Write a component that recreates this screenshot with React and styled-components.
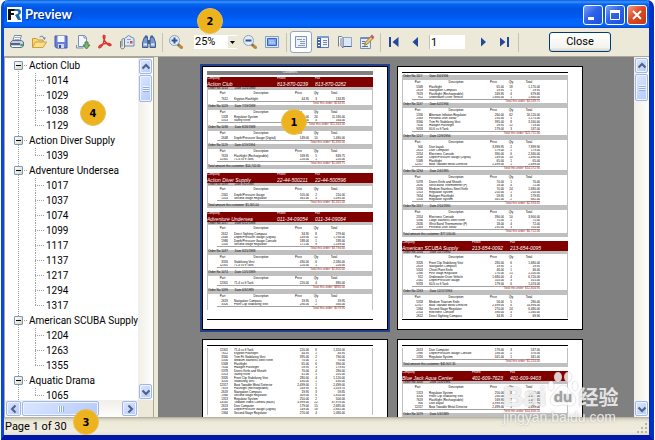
import React, { useState } from 'react'
import styled, { createGlobalStyle, css } from 'styled-components'

const GlobalStyle = createGlobalStyle`
* { box-sizing: border-box; }
body {
  margin: 0;
  background: #fff;
  font-family: Roboto, 'Liberation Sans', sans-serif;
  font-size: 11px;
  color: #000;
}
button, input, select { font: inherit; color: inherit; margin: 0; padding: 0; }
ul { list-style: none; margin: 0; padding: 0; }
`;

const Window = styled.div`
position: relative;
height: 100vh;
margin: 0 1px;
display: flex;
flex-direction: column;
overflow: hidden;
background: #ece9d8;
border: solid #0a48dc;
border-width: 0 5px 5px 3px;
border-bottom-color: #0018a8;
border-right-color: #0030c8;
border-radius: 7px 7px 0 0;
`;

const TitleBar = styled.header`
flex: none;
height: 28px;
margin: 0 -5px 0 -3px;
padding: 0 7px 0 6px;
display: flex;
align-items: center;
gap: 2px;
background: linear-gradient(#0a5be0 0, #3a93ff 2px, #0566f0 4px, #0054e3 9px, #0058ee 16px, #0268fe 23px, #0262f5 26px, #0144c8 28px);
`;

const Title = styled.h1`
flex: 1;
margin: 0 0 0 1px;
font: bold 13px 'Lato', sans-serif;
color: #fff;
text-shadow: 1px 1px 1px #002a8c;
`;

const WindowButton = styled.button`
width: 20px;
height: 20px;
margin-top: 2px;
border: 1px solid #fff;
border-radius: 3px;
background: ${props => props.$close
    ? 'linear-gradient(135deg, #f0a088, #dd4a22 45%, #c8380e)'
    : 'linear-gradient(135deg, #7ba2f4, #2e62e8 45%, #1a50dc)'};
svg { display: block; margin: auto; }
`;

const Toolbar = styled.div`
flex: none;
height: 29px;
padding-left: 2px;
display: flex;
align-items: center;
border-bottom: 1px solid #aca899;
`;

const ToolButton = styled.button`
flex: none;
width: 22px;
height: 22px;
display: flex;
align-items: center;
justify-content: center;
border: 1px solid transparent;
border-radius: 3px;
background: none;
${props => props.$active && css`
  background: #fff;
  border-color: #8aa9cc;
`}
`;

const Separator = styled.div`
flex: none;
width: 1px;
height: 19px;
margin: 0 ${props => props.$wide ? 3 : 2}px;
background: #c5c2b2;
`;

const ZoomSelect = styled.select`
width: 43px;
height: 14px;
margin: 0 2px 0 7px;
padding-left: 1px;
border: 0;
border-radius: 0;
appearance: none;
background: #fff;
line-height: 14px;
`;

const SelectBox = styled.label`
position: relative;
display: flex;
svg {
  position: absolute;
  right: 2px;
  top: 1px;
  pointer-events: none;
  background: #ece9d8;
}
`;

const PageInput = styled.input`
width: 36px;
height: 14px;
margin: 0 7px 0 2px;
padding-left: 1px;
border: 0;
border-left: 1px solid #c5c2b2;
background: #fff;
`;

const CloseButton = styled.button`
width: 62px;
height: 20px;
margin-left: 28px;
border: 1px solid #003c74;
border-radius: 3px;
background: linear-gradient(#fff, #f4f3ee 80%, #d8d2c6);
line-height: 16px;
`;

const Body = styled.div`
flex: 1;
min-height: 0;
display: flex;
gap: 4px;
`;

const Outline = styled.nav`
flex: none;
width: 150px;
display: grid;
grid-template-columns: 1fr 15px;
grid-template-rows: 1fr 17px;
border: 1px solid #aca899;
border-bottom: 0;
background: #fff;
`;

const Tree = styled.ul`
overflow: hidden;
padding: 0 0 0 9px;
font-size: 10px;
background: repeating-linear-gradient(#a0a0a0 0 1px, transparent 1px 2px) 13px 7px / 1px 100% no-repeat;
`;

const TreeRow = styled.div`
height: 15px;
display: flex;
align-items: center;
white-space: nowrap;
`;

const Expander = styled.button`
flex: none;
width: 9px;
height: 9px;
display: flex;
align-items: center;
justify-content: center;
border: 1px solid #7898b5;
border-radius: 1px;
background: linear-gradient(135deg, #fff, #d8d2c4);
`;

const Stub = styled.span`
flex: none;
width: 4px;
height: 1px;
margin: 0 1px;
background: repeating-linear-gradient(90deg, #a0a0a0 0 1px, transparent 1px 2px);
`;

const Branch = styled.span`
flex: none;
width: 9px;
height: 15px;
margin: 0 2px 0 21px;
background:
  repeating-linear-gradient(#a0a0a0 0 1px, transparent 1px 2px) 0 0 / 1px ${props => props.$last ? '8px' : '15px'} no-repeat,
  repeating-linear-gradient(90deg, #a0a0a0 0 1px, transparent 1px 2px) 0 7px / 9px 1px no-repeat;
`;

const ScrollTrack = styled.div`
display: flex;
flex-direction: ${props => props.$horizontal ? 'row' : 'column'};
flex: none;
padding: 1px;
gap: 1px;
background: ${props => props.$horizontal
    ? 'linear-gradient(#f0eee8, #fefefb)'
    : 'linear-gradient(90deg, #f0eee8, #fefefb)'};
${props => !props.$horizontal && 'width: 15px;'}
`;

const ScrollButton = styled.button`
flex: none;
width: ${props => props.$horizontal ? 15 : 13}px;
height: 15px;
display: flex;
align-items: center;
justify-content: center;
border: 1px solid #9db6ee;
border-radius: 2px;
box-shadow: inset 0 0 0 1px #eef3ff;
background: linear-gradient(135deg, #dbe5fe, #b6cbfa);
`;

const ScrollThumb = styled(ScrollButton)`
${props => props.$horizontal ? 'width: 77px;' : 'height: 27px;'}
`;

const ScrollSpace = styled.div`
flex: 1;
`;

const Corner = styled.div`
background: #ece9d8;
`;

const Viewer = styled.main`
flex: 1;
min-width: 0;
display: flex;
background: #808080;
`;

const Pages = styled.div`
flex: 1;
min-width: 0;
padding: 9px 7px 0 0;
display: flex;
flex-wrap: wrap;
align-content: flex-start;
justify-content: center;
gap: 9px;
overflow: hidden;
`;

const StatusBar = styled.footer`
flex: none;
height: 18px;
padding: 2px 0 0 1px;
display: flex;
align-items: center;
justify-content: space-between;
background: linear-gradient(#aca899 0, #d8d4c4 2px, #ece9d8 5px, #f0ede0 14px, #e4e0d0);
line-height: 16px;
`;

// report pages, rendered at 25% zoom

const Sheet = styled.article`
width: 186px;
height: 264px;
padding: 4px 14px 9px 4px;
display: flex;
flex-direction: column;
overflow: hidden;
border: 1px solid #000;
outline: ${props => props.$selected ? '2px solid #24408c' : 'none'};
background: #fff;
font: 3px/3px 'Liberation Sans', sans-serif;
white-space: nowrap;
`;

const SheetTitle = styled.div`
height: 4px;
margin-bottom: 2px;
background: #808080;
color: #fff;
text-align: center;
`;

const SheetRule = styled.div`
flex: none;
height: 1px;
margin: ${props => props.$top ? '1px 0 2px' : 'auto 0 0'};
background: #000;
`;

const Company = styled.div`
flex: none;
height: 10px;
display: grid;
grid-template-columns: 70px 38px 1fr;
grid-template-rows: 4px 6px;
background: #800000;
color: #fff;
em { font-size: 5px; line-height: 7px; overflow: hidden; }
`;

const OrderBar = styled.div`
height: ${props => props.$first ? 3 : 5}px;
padding-left: 1px;
display: flex;
gap: 7px;
background: #c0c0c0;
`;

const OrderBody = styled.div`
padding-left: 9px;
border: solid #c0c0c0;
border-width: 0 1px;
`;

const OrderTable = styled.table`
width: 128px;
table-layout: fixed;
border-spacing: 0;
border-bottom: ${props => props.$open ? '0' : '1px solid #a0a0a0'};
font-size: 3px;
line-height: 3px;
th, td { padding: 0; overflow: hidden; font-weight: normal; }
thead tr { height: ${props => props.$first ? 7 : 5}px; }
tbody tr { height: 4px; }
tbody tr:nth-child(even) { height: 3px; }
`;

const Cell = styled.td`
text-align: ${props => props.$align || 'right'};
`;

const OrderTotal = styled.div`
width: 128px;
height: 3px;
color: #a81818;
text-align: right;
`;

const CustomerTotal = styled.div`
flex: none;
height: 4px;
margin-bottom: 4px;
padding-left: 1px;
background: #c0c0c0;
`;

const Badge = styled.span`
position: absolute;
left: ${props => props.$x}px;
top: ${props => props.$y}px;
width: 26px;
height: 26px;
display: flex;
align-items: center;
justify-content: center;
border: 1px solid #e8c050;
border-radius: 50%;
background: #edb31e;
font: bold 11px 'DejaVu Sans Condensed', sans-serif;
`;

const Watermark = styled.div`
position: absolute;
right: 29px;
bottom: 10px;
width: 117px;
color: rgba(255, 255, 255, 0.8);
text-shadow: 0 0 2px rgba(128, 128, 128, 0.6);
font: 14px/16px 'Liberation Sans', 'Noto Sans CJK SC', sans-serif;
white-space: nowrap;
`;

const WatermarkLogo = styled.div`
display: flex;
align-items: flex-end;
height: 38px;
font: bold 28px/24px 'Liberation Sans', sans-serif;
span:last-child { font: bold 20px/24px 'Noto Sans CJK SC', sans-serif; }
svg { flex: none; }
`;

const outline = [
    { name: 'Action Club', orders: [1014, 1029, 1038, 1129] },
    { name: 'Action Diver Supply', orders: [1039] },
    { name: 'Adventure Undersea', orders: [1017, 1037, 1074, 1099, 1117, 1137, 1217, 1294, 1317] },
    { name: 'American SCUBA Supply', orders: [1204, 1263, 1355] },
    { name: 'Aquatic Drama', orders: [1065] },
]

const parts = {
    900: ['Dive kayak', 3999.95],
    912: ['Underwater Diver Vehicle', 1680],
    1313: ['Regulator System', 250],
    1314: ['Second Stage Regulator', 365],
    1316: ['Regulator System', 341],
    1320: ['Second Stage Regulator', 171],
    1328: ['Regulator System', 430],
    1330: ['Alternate Inflation Regulator', 260],
    1364: ['Second Stage Regulator', 270],
    1390: ['First Stage Regulator', 170],
    1946: ['Second Stage Regulator', 309],
    1986: ['Depth/Pressure Gauge Console', 188],
    2314: ['Electronic Console', 390],
    2341: ['Depth/Pressure Gauge', 105],
    2383: ['Personal Dive Sonar', 235],
    2390: ['Compass Console Mount', 29],
    2612: ['Direct Sighting Compass', 34.95],
    2613: ['Dive Computer', 179],
    2619: ['Navigation Compass', 19.95],
    2630: ['Wrist Band Thermometer (F)', 18],
    2648: ['Depth/Pressure Gauge (Digital)', 149],
    3316: ['Stabilizing Vest', 430],
    3326: ['Front Clip Stabilizing Vest', 280],
    3340: ['Trim Fit Stabilizing Vest', 395],
    5313: ['Safety Knife', 41],
    5318: ['Medium Titanium Knife', 56],
    5324: ['Chisel Point Knife', 46],
    5349: ['Flashlight', 65],
    5356: ['Medium Stainless Steel Knife', 70],
    5378: ['Divers Knife and Sheath', 70],
    5386: ['Large Stainless Steel Knife', 75],
    7612: ['Krypton Flashlight', 44.95],
    7619: ['Flashlight (Rechargeable)', 169.95],
    7654: ['Halogen Flashlight', 59.95],
    9316: ['95.1 cu ft Tank', 325],
    9318: ['60.6 cu ft Tank', 179],
    12301: ['71.4 cu ft Tank', 220],
    12317: ['Boat Towable Metal Detector', 2499],
    13545: ['Towable Video Camera (B&W)', 3999],
}

const pages = [
    {
        title: 'Customers',
        blocks: [
            { company: 'Action Club', phone: '813-870-0239', fax: '813-870-0282' },
            { order: 1014, date: '5/25/1988', first: true, rows: [[7612, 3]] },
            { order: 1029, date: '7/19/1988', rows: [[1328, 26], [5313, 4]] },
            { order: 1038, date: '8/26/1988', rows: [[2648, 10]] },
            { order: 1129, date: '4/19/1994', rows: [[7619, 5], [12301, 1]] },
            { customerTotal: '14,742.65' },
            { company: 'Action Diver Supply', phone: '22-44-500211', fax: '22-44-500596' },
            { order: 1039, date: '9/2/1988', first: true, rows: [[2341, 2], [1314, 3]] },
            { customerTotal: '1,305.00' },
            { company: 'Adventure Undersea', phone: '011-34-09054', fax: '011-34-09064' },
            { order: 1017, date: '6/12/1988', first: true, rows: [[2612, 8], [2648, 12], [1986, 1], [1320, 9]] },
            { order: 1037, date: '8/25/1988', rows: [[3316, 6], [12301, 1]] },
            { order: 1074, date: '12/5/1989', rows: [[12301, 4]] },
            { order: 1099, date: '6/3/1989', rows: [[2619, 1], [3326, 2]] },
        ],
    },
    {
        rule: true,
        blocks: [
            { order: 1117, date: '3/4/1994', rows: [[5349, 18], [2619, 1], [7619, 4], [912, 1]] },
            { order: 1137, date: '6/2/1994', rows: [[1330, 62], [2383, 5], [3340, 8], [7654, 12], [9318, 3]] },
            { order: 1217, date: '12/9/1994', rows: [[900, 2], [2613, 1], [2314, 6], [2648, 10], [5349, 1], [12317, 1]] },
            { order: 1294, date: '2/4/1995', rows: [[5378, 1], [2630, 4], [5356, 24], [1313, 1], [7654, 3], [1316, 2]] },
            { order: 1317, date: '2/10/1995', rows: [[2314, 10], [5386, 1], [2630, 4], [2383, 3]] },
            { customerTotal: '77,530.65' },
            { company: 'American SCUBA Supply', phone: '213-654-0092', fax: '213-654-0095' },
            { order: 1204, date: '10/7/1994', first: true, rows: [[3326, 6], [2619, 1], [5324, 1], [1390, 15], [912, 4], [2341, 3], [9318, 6]] },
            { order: 1263, date: '12/17/1994', rows: [[5318, 5], [12317, 6], [1364, 24], [2314, 4], [2612, 2]], open: true },
        ],
    },
    {
        rule: true,
        blocks: [
            {
                rows: [[12301, 6], [7612, 1], [3340, 2], [5356, 1], [5349, 6], [7654, 3], [5378, 4], [5313, 5], [3326, 4], [3316, 1],
                    [12317, 1], [7619, 6], [2619, 3], [1946, 6], [1313, 2], [13545, 22], [2613, 15], [2648, 18], [1364, 4]],
                open: true,
            },
        ],
    },
    {
        rule: true,
        blocks: [
            { rows: [[2613, 3], [1986, 2], [1316, 1]] },
            { customerTotal: '45,907.35' },
            { company: 'Blue Jack Aqua Center', phone: '401-609-7623', fax: '401-609-9403' },
            { order: 1006, date: '11/6/1994', first: true, rows: [[1313, 8], [3326, 4], [7619, 7], [900, 2], [12317, 1]] },
            { order: 1079, date: '5/3/1989', rows: [], open: true },
        ],
    },
]

const money = n => n.toFixed(2).replace(/\B(?=(\d{3})+(?!\d))/g, ',')

function Order({ order, date, rows, first, open }) {
    const total = rows.reduce((sum, [id, qty]) => sum + parts[id][1] * qty, 0)
    return (
        <section>
            {order && <OrderBar $first={first}><span>Order No {order}</span><span>Date {date}</span></OrderBar>}
            <OrderBody>
                {rows.length > 0 && <OrderTable $first={first} $open={open}>
                    <colgroup>
                        <col style={{ width: 11 }} />
                        <col style={{ width: 6 }} />
                        <col style={{ width: 54 }} />
                        <col style={{ width: 21 }} />
                        <col style={{ width: 14 }} />
                        <col />
                    </colgroup>
                    {order && <thead>
                        <tr>
                            <th>Part</th><th /><th>Description</th><th>Price</th><th>Qty</th><th>Total</th>
                        </tr>
                    </thead>}
                    <tbody>
                        {rows.map(([id, qty]) => (
                            <tr key={id}>
                                <Cell>{id}</Cell>
                                <Cell />
                                <Cell $align='left'>{parts[id][0]}</Cell>
                                <Cell>{money(parts[id][1])}</Cell>
                                <Cell $align='center'>{qty}</Cell>
                                <Cell>{money(parts[id][1] * qty)}</Cell>
                            </tr>
                        ))}
                    </tbody>
                </OrderTable>}
                {!open && <OrderTotal>Total this order: ${money(total)}</OrderTotal>}
            </OrderBody>
        </section>
    )
}

function ReportPage({ page, selected, onClick }) {
    return (
        <Sheet $selected={selected} onClick={onClick}>
            {page.title && <SheetTitle>{page.title}</SheetTitle>}
            {page.rule && <SheetRule $top />}
            {page.blocks.map((block, i) => {
                if (block.company) {
                    return (
                        <Company key={i}>
                            <span>Company</span><span>Phone</span><span>Fax</span>
                            <em>{block.company}</em><em>{block.phone}</em><em>{block.fax}</em>
                        </Company>
                    )
                }
                if (block.customerTotal) {
                    return <CustomerTotal key={i}>Total amount this customer: ${block.customerTotal}</CustomerTotal>
                }
                return <Order key={i} {...block} />
            })}
            <SheetRule />
        </Sheet>
    )
}

const Svg = ({ size = 16, children }) => (
    <svg width={size} height={size} viewBox={`0 0 ${size} ${size}`} aria-hidden='true'>{children}</svg>
)

const Glass = ({ plus }) => (
    <Svg>
        <path d='M10 10.500l3.500 3' stroke='#b98a3c' strokeWidth='3' strokeLinecap='round' />
        <path d='M9 9.500l2 2' stroke='#5f6f8c' strokeWidth='2' />
        <circle cx='6.500' cy='6.500' r='5' fill='#e4eefb' stroke='#8aa0c4' />
        <path d={plus ? 'M3.500 6.500h6M6.500 3.500v6' : 'M3.500 6.500h6'} stroke='#33538f' strokeWidth='2' />
    </Svg>
)

const icons = {
    print: <Svg>
        <path d='M5.500 1.500h7l-2 6H3.500z' fill='#fff' stroke='#7788a8' />
        <path d='M6 3.500h5M5.500 5.500h5' stroke='#9fb0cc' />
        <path d='M1.500 8.500l2-2h9l2 1.500v4l-2 1.500h-9l-2-1z' fill='#c4cfe0' stroke='#5f7296' />
        <path d='M2 9h9v2H2z' fill='#55678c' />
        <path d='M3 12.500h8' stroke='#fff' />
        <path d='M11.500 11h2.500' stroke='#3fae3f' strokeWidth='2' />
    </Svg>,
    open: <Svg>
        <path d='M1.500 13.500v-9h4l1.500 1.500h5v2' fill='#f7d774' stroke='#c89a3c' />
        <path d='M1.500 13.500l3-5.500h11l-3.500 5.500z' fill='#fbe08a' stroke='#d0a040' />
        <path d='M8.500 3q3-2.500 4.500 1' fill='none' stroke='#6c86b8' />
        <path d='M11.500 3.500h3.500L13.500 6z' fill='#6c86b8' />
    </Svg>,
    save: <Svg>
        <path d='M2 2h12v12H3.500L2 12.500z' fill='#6a7fd8' stroke='#4656ac' />
        <path d='M4.500 2h7v6h-7z' fill='#f4f7ff' />
        <path d='M5 10h6v4H5z' fill='#d0d8ee' />
        <path d='M6 11h2v3H6z' fill='#3a4a9c' />
    </Svg>,
    export: <Svg>
        <path d='M3.500 1.500h6l2 2v9h-8z' fill='#f3f7fd' stroke='#7890b4' />
        <path d='M9 1.500V4h2.500' fill='none' stroke='#7890b4' />
        <path d='M1.500 11v3h7' fill='none' stroke='#7890b4' />
        <path d='M10 8h3v3h2l-3.500 4L8 11h2z' fill='#7eb474' stroke='#4a8048' />
    </Svg>,
    pdf: <Svg>
        <path d='M6.500 1.500c2.500-.5 1 3 .5 5-.5 3.500-3 8-5 7-1-1.500 3-3.500 6.500-4 3-.5 5.500.5 5.500 1.500-.5 1.500-4-.5-5.500-3C7 6 5.500 2.500 6.500 1.500z' fill='none' stroke='#dc3630' strokeWidth='1.500' />
    </Svg>,
    mail: <Svg>
        <path d='M5.500 4.500l4-3 5.500 3v7.500h-9.500z' fill='#dce8f8' stroke='#6f88b4' />
        <path d='M8 5.500h4M8 8.500h2' stroke='#8aa0c4' />
        <path d='M11 7h2.500v2.500H11z' fill='#d05040' />
        <path d='M1.500 7v6c0 2.500 4 2.500 4 0V6c0-2-2.500-2-2.500 0v6.500' fill='none' stroke='#70788c' />
    </Svg>,
    find: <Svg>
        <path d='M3.500 3h3v3l.5 7.500H1.500v-5zM9.500 3h3l2 5.500v5H9V6z' fill='#7898cc' stroke='#3f5c94' />
        <path d='M4 2.500h2.500M9.500 2.500h2.500' stroke='#3f5c94' strokeWidth='2' />
        <path d='M7 6h2v4H7z' fill='#3f5c94' />
        <path d='M2.500 10.500h3.500M10 10.500h3.500' stroke='#dfeafa' strokeWidth='2' />
    </Svg>,
    fullScreen: <Svg>
        <path d='M1.500 2.500h13v11h-13z' fill='#dfeafa' stroke='#7f9ccc' />
        <path d='M3.500 4.500h9v7h-9z' fill='#7ea4ee' stroke='#3b62b8' />
        <path d='M5 7h5M5 9h6' stroke='#c8dafa' />
    </Svg>,
    outline: <Svg>
        <path d='M2.500 2.500h11v11h-11z' fill='#eef3fb' stroke='#8094b8' />
        <path d='M4 5.500h5M7 7.500h5M7 9.500h5M5 11.500h7M10 5.500h2' stroke='#8c9ab8' />
    </Svg>,
    thumbs: <Svg>
        <path d='M2.500 2.500h11v11h-11z' fill='#f2f6fc' stroke='#6078a8' />
        <path d='M2 2h4v12H2z' fill='#4466a4' />
        <path d='M2 2h12v2H2z' fill='#7d9ddb' />
        <path d='M3 5.500h2M3 8.500h2M3 11.500h2' stroke='#fff' />
        <path d='M8 6.500h4M8 8.500h4M8 10.500h4' stroke='#7484a4' />
    </Svg>,
    pageSetup: <Svg>
        <path d='M6 3.500h8.500v9H6z' fill='#dce7f8' stroke='#90a4c4' />
        <path d='M1.500 12.500v-10h3q1.500 1 1.500 2v9.500l-2-2.500V4' fill='#f8faff' stroke='#707c94' />
        <path d='M7 12.500h7.500' stroke='#3f5c94' />
    </Svg>,
    edit: <Svg>
        <path d='M1.500 3.500h10v11h-10z' fill='#e6eefa' stroke='#7890b4' />
        <path d='M2 3h9v2H2z' fill='#6c8cd0' />
        <path d='M3 7.500h3M3 9.500h3M3 12.500h6' stroke='#5c74a4' />
        <path d='M5.500 11.500l1-3.500 6-6 2 2-6 6z' fill='#f0c860' stroke='#9c7c44' />
        <path d='M12 1.500l2.500 2.500' stroke='#c45a72' strokeWidth='2.500' />
    </Svg>,
    first: <Svg><path d='M3 3h2v10H3zM12.500 3v10L6.500 8z' fill='#24479c' /></Svg>,
    prev: <Svg><path d='M10 3v10L4.500 8z' fill='#24479c' /></Svg>,
    next: <Svg><path d='M6 3.500v9L11 8z' fill='#24479c' /></Svg>,
    last: <Svg><path d='M10 3h2v10h-2zM3 3.500v9L8.500 8z' fill='#24479c' /></Svg>,
}

const chevrons = {
    up: 'M1.500 6.500L5 3l3.500 3.500',
    down: 'M1.500 3.500L5 7l3.500-3.500',
    left: 'M6.500 1.500L3 5l3.500 3.500',
    right: 'M3.500 1.500L7 5 3.500 8.500',
}

const Chevron = ({ dir }) => (
    <Svg size={10}><path d={chevrons[dir]} fill='none' stroke='#4d6185' strokeWidth='2' /></Svg>
)

function ScrollBar({ horizontal }) {
    return (
        <ScrollTrack $horizontal={horizontal}>
            <ScrollButton $horizontal={horizontal} aria-label={horizontal ? 'Scroll left' : 'Scroll up'}>
                <Chevron dir={horizontal ? 'left' : 'up'} />
            </ScrollButton>
            <ScrollThumb $horizontal={horizontal} aria-label='Scroll thumb'>
                <Svg size={8}>
                    <path d={horizontal ? 'M1.500 1v6M3.500 1v6M5.500 1v6' : 'M1 1.500h6M1 3.500h6M1 5.500h6'} stroke='#f4f8ff' />
                    <path d={horizontal ? 'M2.500 1v6M4.500 1v6M6.500 1v6' : 'M1 2.500h6M1 4.500h6M1 6.500h6'} stroke='#8caaf0' />
                </Svg>
            </ScrollThumb>
            <ScrollSpace />
            <ScrollButton $horizontal={horizontal} aria-label={horizontal ? 'Scroll right' : 'Scroll down'}>
                <Chevron dir={horizontal ? 'right' : 'down'} />
            </ScrollButton>
        </ScrollTrack>
    )
}

function TreeNode({ node }) {
    const [open, setOpen] = useState(true)
    return (
        <li>
            <TreeRow>
                <Expander aria-label={`Toggle ${node.name}`} onClick={() => setOpen(!open)}>
                    <Svg size={5}><path d={open ? 'M0 2.500h5' : 'M0 2.500h5M2.500 0v5'} stroke='#000' /></Svg>
                </Expander>
                <Stub />
                {node.name}
            </TreeRow>
            {open && <ul>
                {node.orders.map((order, i) => (
                    <li key={order}>
                        <TreeRow><Branch $last={i === node.orders.length - 1} />{order}</TreeRow>
                    </li>
                ))}
            </ul>}
        </li>
    )
}

export default function App() {
    const [page, setPage] = useState(1)
    const pageCount = 30

    const goTo = (n) => setPage(Math.min(pageCount, Math.max(1, n || 1)))

    return (
        <>
            <GlobalStyle />
            <Window>
                <TitleBar>
                    <Svg size={15}>
                        <rect width='15' height='15' fill='#fff' />
                        <path d='M1 2h7v2H4v2h3v2H4v5H1z' fill='#111' />
                        <path d='M8 2h3q3 0 3 3 0 2-2 3l2 5h-3L8 8l3-1.500q1-2-1-2.500H7z' fill='#1c6ea8' />
                    </Svg>
                    <Title>Preview</Title>
                    <WindowButton aria-label='Minimize'><Svg size={12}><path d='M1 9.500h6' stroke='#fff' strokeWidth='3' /></Svg></WindowButton>
                    <WindowButton aria-label='Maximize'><Svg size={12}><path d='M1.500 2v8.500h9V2' fill='none' stroke='#fff' /><path d='M1 2.500h10' stroke='#fff' strokeWidth='3' /></Svg></WindowButton>
                    <WindowButton $close aria-label='Close window'><Svg size={12}><path d='M2 2l8 8M10 2l-8 8' stroke='#fff' strokeWidth='2' /></Svg></WindowButton>
                </TitleBar>
                <Toolbar>
                    <ToolButton aria-label='Print'>{icons.print}</ToolButton>
                    <ToolButton aria-label='Open'>{icons.open}</ToolButton>
                    <ToolButton aria-label='Save'>{icons.save}</ToolButton>
                    <ToolButton aria-label='Export'>{icons.export}</ToolButton>
                    <ToolButton aria-label='Export to PDF'>{icons.pdf}</ToolButton>
                    <ToolButton aria-label='Send by e-mail'>{icons.mail}</ToolButton>
                    <ToolButton aria-label='Find'>{icons.find}</ToolButton>
                    <Separator />
                    <ToolButton aria-label='Zoom in'><Glass plus /></ToolButton>
                    <SelectBox>
                        <ZoomSelect aria-label='Zoom' defaultValue='25%'>
                            <option>25%</option>
                            <option>50%</option>
                            <option>75%</option>
                            <option>100%</option>
                        </ZoomSelect>
                        <svg width='9' height='12' viewBox='0 0 9 12'><path d='M2 5h5L4.500 8z' /></svg>
                    </SelectBox>
                    <ToolButton aria-label='Zoom out'><Glass /></ToolButton>
                    <ToolButton aria-label='Full screen'>{icons.fullScreen}</ToolButton>
                    <Separator $wide />
                    <ToolButton $active aria-label='Outline'>{icons.outline}</ToolButton>
                    <ToolButton aria-label='Thumbnails'>{icons.thumbs}</ToolButton>
                    <ToolButton aria-label='Page settings'>{icons.pageSetup}</ToolButton>
                    <ToolButton aria-label='Edit page'>{icons.edit}</ToolButton>
                    <Separator />
                    <ToolButton aria-label='First page' onClick={() => goTo(1)}>{icons.first}</ToolButton>
                    <ToolButton aria-label='Previous page' onClick={() => goTo(page - 1)}>{icons.prev}</ToolButton>
                    <PageInput aria-label='Page number' value={page} onChange={e => goTo(parseInt(e.target.value))} />
                    <ToolButton aria-label='Next page' onClick={() => goTo(page + 1)}>{icons.next}</ToolButton>
                    <ToolButton aria-label='Last page' onClick={() => goTo(pageCount)}>{icons.last}</ToolButton>
                    <Separator />
                    <CloseButton>Close</CloseButton>
                </Toolbar>
                <Body>
                    <Outline aria-label='Report outline'>
                        <Tree>
                            {outline.map(node => <TreeNode key={node.name} node={node} />)}
                        </Tree>
                        <ScrollBar />
                        <ScrollBar horizontal />
                        <Corner />
                    </Outline>
                    <Viewer>
                        <Pages>
                            {pages.map((p, i) => (
                                <ReportPage key={i} page={p} selected={page === i + 1} onClick={() => goTo(i + 1)} />
                            ))}
                        </Pages>
                        <ScrollBar />
                    </Viewer>
                </Body>
                <StatusBar>
                    Page {page} of {pageCount}
                    <Svg size={12}>
                        <path d='M8 2h2v2H8zM8 6h2v2H8zM4 6h2v2H4zM8 10h2v2H8zM4 10h2v2H4zM0 10h2v2H0z' fill='#b8b4a2' />
                    </Svg>
                </StatusBar>
                <Badge $x={277} $y={109}>1</Badge>
                <Badge $x={193} $y={8}>2</Badge>
                <Badge $x={69} $y={409}>3</Badge>
                <Badge $x={76} $y={100}>4</Badge>
                <Watermark>
                    <WatermarkLogo>
                        <span>Bai</span>
                        <svg width='32' height='38' viewBox='0 0 32 38' aria-hidden='true'>
                            <g fill='#fff' fillOpacity='0.8' stroke='#808080' strokeOpacity='0.2'>
                                <ellipse cx='4' cy='15' rx='3' ry='5' />
                                <ellipse cx='11' cy='6' rx='4' ry='5' />
                                <ellipse cx='21' cy='6' rx='4' ry='5' />
                                <ellipse cx='28' cy='15' rx='3' ry='5' />
                                <path d='M16 14c5 0 6 5 10 9 5 5 3 12-3 12-3 0-4-1-7-1s-4 1-7 1c-6 0-8-7-3-12 4-4 5-9 10-9z' />
                            </g>
                            <text x='16' y='31' textAnchor='middle' fontSize='15' fill='#a0a0a0'>du</text>
                        </svg>
                        <span>经验</span>
                    </WatermarkLogo>
                    jingyan.baidu.com
                </Watermark>
            </Window>
        </>
    )
}
